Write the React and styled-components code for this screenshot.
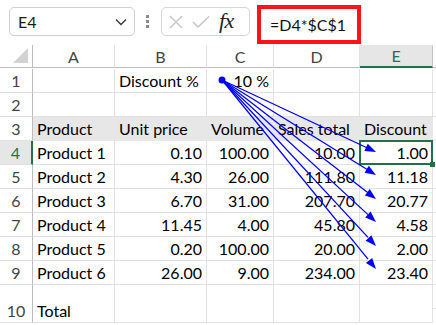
import React from 'react'
import styled, { createGlobalStyle, css } from 'styled-components'

const GlobalStyle = createGlobalStyle`
  html, body {
    margin: 0;
    padding: 0;
    background: #ffffff;
  }
  body {
    font-family: Lato, "Open Sans", sans-serif;
    overflow: hidden;
  }
`

const GREEN = '#217346'
const GRID = '#e1e1e1'

const Page = styled.div`
  width: 436px;
  height: 325px;
  display: flex;
  flex-direction: column;
  background: #ffffff;
`

const Toolbar = styled.div`
  height: 45px;
  display: flex;
  align-items: flex-start;
  flex-shrink: 0;
`

const NameBox = styled.div`
  margin: 7px 0 0 9px;
  width: 126px;
  height: 29px;
  box-sizing: border-box;
  border: 1px solid #cfcfcf;
  border-radius: 5px;
  display: flex;
  align-items: center;
  justify-content: space-between;
  padding: 0 7px 0 8px;
  font-size: 16px;
  color: #1b1b1b;
`

const Dots = styled.div`
  margin: 15px 0 0 11px;
  width: 4px;
  display: flex;
  flex-direction: column;
  gap: 2px;

  span {
    width: 3px;
    height: 3px;
    background: #8a8a8a;
  }
`

const EditBox = styled.div`
  margin: 7px 0 0 11px;
  width: 89px;
  height: 29px;
  box-sizing: border-box;
  border: 1px solid #d6d6d6;
  border-radius: 5px;
  display: flex;
  align-items: center;
  padding: 0 0 0 6px;
  gap: 8px;
`

const Fx = styled.span`
  font-family: "Liberation Serif", serif;
  font-style: italic;
  font-size: 22px;
  line-height: 1;
  color: #222;
  margin: -2px 0 0 1px;
  letter-spacing: -0.5px;
`

const FormulaBox = styled.div`
  margin: 5px 0 0 7px;
  width: 104px;
  height: 39px;
  box-sizing: border-box;
  border: 4px solid #ff1414;
  display: flex;
  align-items: center;
  padding-left: 9px;
  font-size: 16px;
  color: #111;
`

const Sheet = styled.div`
  position: relative;
  display: grid;
  grid-template-columns: 33px 82px 92px 67px 86px 73px 1fr;
  grid-auto-rows: 24px;
  flex: 1;
  font-size: 16px;
  color: #000;
`

const HeaderCell = styled.div`
  box-sizing: border-box;
  height: 23px;
  display: flex;
  align-items: center;
  justify-content: center;
  color: #444;
  background: #ffffff;
  border-right: 1px solid ${GRID};
  border-bottom: 1px solid #bdbdbd;
  ${p => p.$active && css`
    background: #e6e6e6;
    color: ${GREEN};
    border-right-color: #c6c6c6;
    border-bottom: 2px solid ${GREEN};
  `}
`

const Corner = styled(HeaderCell)`
  position: relative;
  border-right: 1px solid #bdbdbd;

  &::after {
    content: '';
    position: absolute;
    right: 4px;
    bottom: 4px;
    border-style: solid;
    border-width: 0 0 15px 15px;
    border-color: transparent transparent #d2d2d2 transparent;
  }
`

const RowHead = styled.div`
  box-sizing: border-box;
  display: flex;
  align-items: flex-end;
  justify-content: center;
  padding-bottom: 2px;
  color: #444;
  border-right: 1px solid #bdbdbd;
  border-bottom: 1px solid ${GRID};
  ${p => p.$active && css`
    background: #e6e6e6;
    color: ${GREEN};
    border-right: 2px solid ${GREEN};
  `}
`

const Cell = styled.div`
  position: relative;
  box-sizing: border-box;
  display: flex;
  align-items: flex-end;
  justify-content: ${p => (p.$num ? 'flex-end' : 'flex-start')};
  padding: 0 4px 2px 4px;
  white-space: nowrap;
  border-right: 1px solid ${GRID};
  border-bottom: 1px solid ${GRID};
  ${p => p.$fill && css`
    background: #e7e7e7;
    border-right-color: #e7e7e7;
    border-bottom-color: #e7e7e7;
  `}
  ${p => p.$selected && css`
    &::after {
      content: '';
      position: absolute;
      left: -1px;
      top: -1px;
      right: -1px;
      bottom: -1px;
      border: 2px solid ${GREEN};
    }
    &::before {
      content: '';
      position: absolute;
      right: -3px;
      bottom: -3px;
      width: 5px;
      height: 5px;
      background: ${GREEN};
      z-index: 1;
    }
  `}
`

const ArrowLayer = styled.svg`
  position: absolute;
  left: 0;
  top: 0;
  width: 436px;
  height: 280px;
  pointer-events: none;
`

const columns = ['A', 'B', 'C', 'D', 'E']

const rows = [
  { n: 1, cells: ['', 'Discount %', '10 %', '', ''], num: [false, false, true] },
  { n: 2, cells: ['', '', '', '', ''] },
  { n: 3, cells: ['Product', 'Unit price', 'Volume', 'Sales total', 'Discount'], fill: true },
  { n: 4, cells: ['Product 1', '0.10', '100.00', '10.00', '1.00'] },
  { n: 5, cells: ['Product 2', '4.30', '26.00', '111.80', '11.18'] },
  { n: 6, cells: ['Product 3', '6.70', '31.00', '207.70', '20.77'] },
  { n: 7, cells: ['Product 4', '11.45', '4.00', '45.80', '4.58'] },
  { n: 8, cells: ['Product 5', '0.20', '100.00', '20.00', '2.00'] },
  { n: 9, cells: ['Product 6', '26.00', '9.00', '234.00', '23.40'] },
  { n: 10, cells: ['Total', '', '', '', ''], tall: true },
]

const origin = [222, 35]
const tips = [107, 130, 154, 177, 201, 224].map(y => [376, y])

function arrowHead([x1, y1], [x2, y2]) {
  const dx = x2 - x1
  const dy = y2 - y1
  const len = Math.hypot(dx, dy)
  const ux = dx / len
  const uy = dy / len
  const bx = x2 - ux * 11
  const by = y2 - uy * 11
  const px = -uy * 4
  const py = ux * 4
  return `${x2},${y2} ${bx + px},${by + py} ${bx - px},${by - py}`
}

function isNum(row, i) {
  if (row.num) return !!row.num[i]
  return row.n >= 4 && row.n <= 9 && i > 0
}

export default function App() {
  return (
    <Page>
      <GlobalStyle />
      <Toolbar>
        <NameBox>
          E4
          <svg width="12" height="8" viewBox="0 0 12 8">
            <path d="M1 1.5 L6 6.5 L11 1.5" fill="none" stroke="#333" strokeWidth="1.3" />
          </svg>
        </NameBox>
        <Dots><span /><span /><span /></Dots>
        <EditBox>
          <svg width="16" height="16" viewBox="0 0 16 16">
            <path d="M2 2 L14 14 M14 2 L2 14" stroke="#c4c4c4" strokeWidth="1.4" />
          </svg>
          <svg width="18" height="14" viewBox="0 0 18 14">
            <path d="M1 7 L6 12 L17 1.5" fill="none" stroke="#c4c4c4" strokeWidth="1.4" />
          </svg>
          <Fx>fx</Fx>
        </EditBox>
        <FormulaBox>=D4*$C$1</FormulaBox>
      </Toolbar>

      <Sheet>
        <Corner />
        {columns.map(c => (
          <HeaderCell key={c} $active={c === 'E'}>{c}</HeaderCell>
        ))}
        <HeaderCell />

        {rows.map(row => (
          <React.Fragment key={row.n}>
            <RowHead $active={row.n === 4} style={row.tall ? { height: 38 } : undefined}>
              {row.n}
            </RowHead>
            {row.cells.map((v, i) => (
              <Cell
                key={i}
                $num={isNum(row, i)}
                $fill={row.fill}
                $selected={row.n === 4 && i === 4}
                style={row.tall ? { height: 38 } : undefined}
              >
                {v}
              </Cell>
            ))}
            <Cell />
          </React.Fragment>
        ))}

        <ArrowLayer viewBox="0 0 436 280">
          <circle cx={origin[0]} cy={origin[1]} r="3.5" fill="#0000ff" />
          {tips.map((t, i) => (
            <g key={i}>
              <line x1={origin[0]} y1={origin[1]} x2={t[0] - 8} y2={t[1] - 8 * (t[1] - origin[1]) / (t[0] - origin[0])} stroke="#0000ff" strokeWidth="1.3" />
              <polygon points={arrowHead(origin, t)} fill="#0000ff" />
            </g>
          ))}
        </ArrowLayer>
      </Sheet>
    </Page>
  )
}
